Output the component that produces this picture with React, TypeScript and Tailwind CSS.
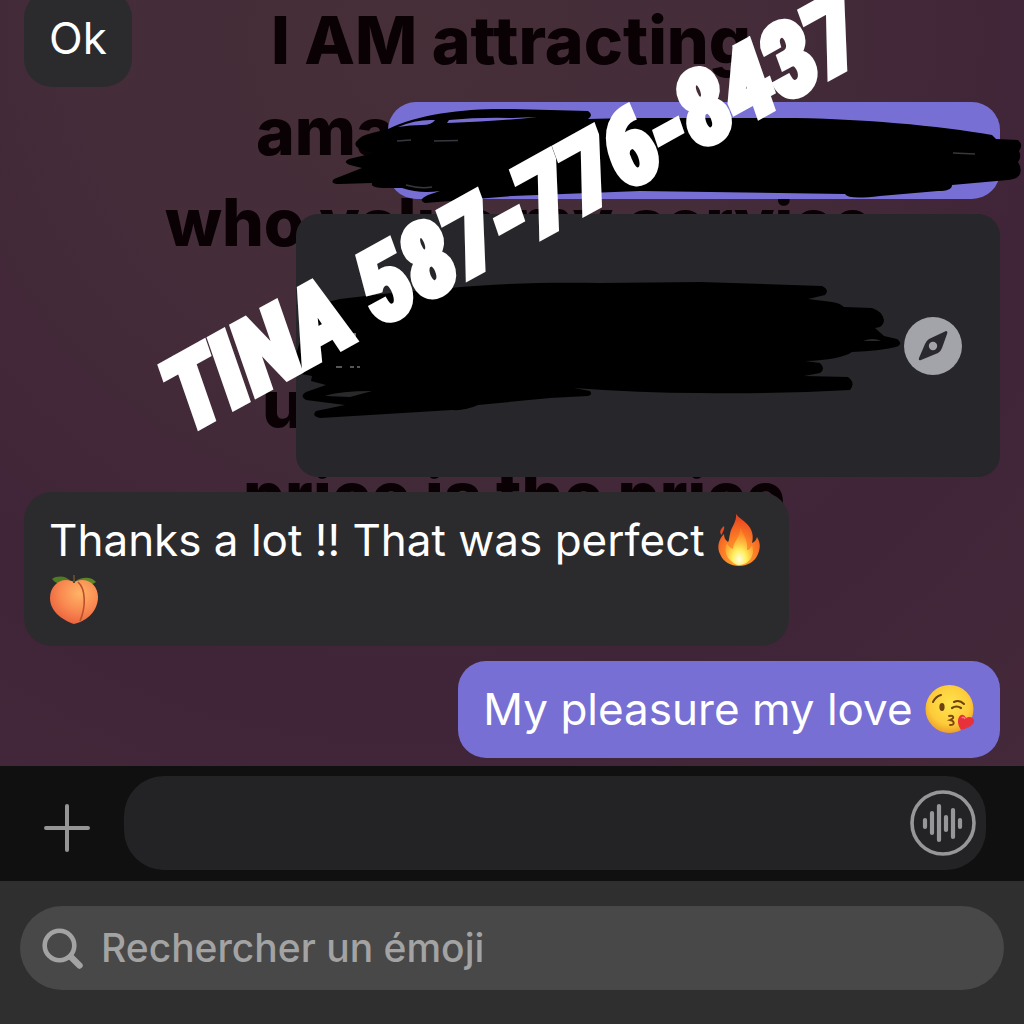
import type { ReactNode } from "react";

interface WallpaperLine {
  text: string;
  indent: string;
}

const wallpaperLines: WallpaperLine[] = [
  { text: "I AM attracting", indent: "pl-[271px]" },
  { text: "ama", indent: "pl-[256px]" },
  { text: "who value my service", indent: "pl-[165px]" },
  { text: "", indent: "pl-0" },
  { text: "u", indent: "pl-[262px]" },
  { text: "price is the price", indent: "pl-[243px]" },
];

function Bubble({ mine, children }: { mine?: boolean; children: ReactNode }) {
  return (
    <div
      className={`max-w-[765px] px-[25px] py-[20px] rounded-[28px] text-[44px] leading-[57px] text-white ${
        mine ? "self-end bg-[#776fd3]" : "self-start bg-[#2b2b2d]"
      }`}
    >
      {children}
    </div>
  );
}

function FireEmoji() {
  return (
    <svg viewBox="3 0 44 54" className="inline-block w-[44px] h-[54px] align-[-11px]" role="img" aria-label="fire">
      <defs>
        <radialGradient id="fireOuter" cx="0.5" cy="0.85" r="0.85">
          <stop offset="0" stopColor="#ffb52e" />
          <stop offset="0.5" stopColor="#fb7a26" />
          <stop offset="1" stopColor="#e83d1e" />
        </radialGradient>
        <radialGradient id="fireInner" cx="0.5" cy="0.85" r="0.75">
          <stop offset="0" stopColor="#fffde0" />
          <stop offset="0.35" stopColor="#ffee5c" />
          <stop offset="1" stopColor="#ff9a2a" stopOpacity="0.4" />
        </radialGradient>
      </defs>
      <path
        d="M22 1c1 8-5 13-6 20-1 4-1 7-2 8-3-2-4-5-4-8-6 6-7 14-4 20 3 8 11 12 19 12s16-4 19-12c3-7 2-12-1-17-1 3-2 5-5 6 2-7 0-14-5-19-4-4-8-6-11-10z"
        fill="url(#fireOuter)"
      />
      <path d="M10 13c-4 3-5 7-2 9 0-3 3-5 2-9z" fill="#e84a20" />
      <path
        d="M26 15c1 8-7 14-7 21-3-1-5-3-6-6-3 7-1 13 3 17 3 3 6 5 9 5 5 0 10-3 12-7 3-5 2-9 1-13-1 3-3 5-5 5 1-9-3-15-7-22z"
        fill="url(#fireInner)"
      />
    </svg>
  );
}

function PeachEmoji() {
  return (
    <svg viewBox="0 0 50 50" className="inline-block w-[50px] h-[50px] align-[-12px]" role="img" aria-label="peach">
      <defs>
        <radialGradient id="peachSkin" cx="0.62" cy="0.3" r="0.75">
          <stop offset="0" stopColor="#ffb467" />
          <stop offset="0.55" stopColor="#f98850" />
          <stop offset="1" stopColor="#e95f3c" />
        </radialGradient>
      </defs>
      <path d="M3 4c6-4 15-3 19 3-5 4-14 4-19-3z" fill="#4f7b22" />
      <path d="M47 7c-4-5-13-6-20-1 4 4 14 6 20 1z" fill="#5b8728" />
      <path
        d="M25 49C13 45 1 36 1 23 1 12 9 5 17 5c4 0 6 1 8 2 2-1 5-2 8-2 9 0 16 7 16 17 0 13-10 24-24 27z"
        fill="url(#peachSkin)"
      />
      <path d="M29 7c8 7 8 25 2 39" fill="none" stroke="#b9502f" strokeWidth="1.6" />
      <path d="M25 0v8" stroke="#5d4a28" strokeWidth="2" />
    </svg>
  );
}

function KissEmoji() {
  return (
    <svg viewBox="0 0 50 50" className="inline-block w-[50px] h-[50px] align-[-9px]" role="img" aria-label="blowing a kiss">
      <defs>
        <radialGradient id="kissFace" cx="0.5" cy="0.4" r="0.6">
          <stop offset="0" stopColor="#ffe44d" />
          <stop offset="0.7" stopColor="#fdcb3a" />
          <stop offset="1" stopColor="#eda02a" />
        </radialGradient>
      </defs>
      <circle cx="24.5" cy="25" r="24" fill="url(#kissFace)" />
      <ellipse cx="17" cy="23" rx="2.6" ry="4" fill="#6b4210" />
      <path d="M8 18c2-4 4-6 8-7M29 18c4-2 7-1 10 2" fill="none" stroke="#6b4210" strokeWidth="2" strokeLinecap="round" />
      <path d="M27 24c3-2 6-2 9 0" fill="none" stroke="#6b4210" strokeWidth="2.2" strokeLinecap="round" />
      <path d="M24 32c5-1 6 2 1 4 5 1 5 5 0 5" fill="none" stroke="#7a4513" strokeWidth="1.8" strokeLinecap="round" />
      <path d="M36 46c-3-5-4-9-2-13 2-3 5-3 7 1 3-2 7-1 8 2 1 5-6 8-13 10z" fill="#e7323b" />
      <path d="M37 34c1-1 2-1 3 1" fill="none" stroke="#ff8285" strokeWidth="1.5" />
    </svg>
  );
}

// Marker strokes over the sent message
function MessageScribble() {
  return (
    <svg viewBox="388 101 612 97" className="absolute left-0 top-0 w-[612px] h-[97px] overflow-visible" aria-hidden="true">
      <path
        d="M388 128C420 112 470 107 512 108L588 110Q594 114 588 118L630 117L780 117C860 117 940 125 992 134L996 138L1018 139Q1024 144 1019 150Q1022 156 1018 161Q1022 167 1020 173Q1018 178 1008 179L952 184Q952 190 938 190L880 195Q848 199 845 193L640 190L512 195L425 202Q417 199 428 194L440 190Q420 193 402 187L386 187Q370 187 372 182L340 183Q329 183 334 178L362 167L350 164Q342 161 349 158L374 152Q352 148 356 141Q360 135 372 132Z"
        fill="#000"
      />
      <path
        d="M398 126Q416 118 435 119Q432 124 422 124Q410 124 398 126ZM447 122L449 119Q480 116 512 117L537 116Q500 120 447 122Z"
        fill="#776fd3"
      />
      <path d="M397 140L411 139M434 140L458 139.5M953 152L975 153M406 184Q420 188 432 186" fill="none" stroke="#38363f" strokeWidth="1.5" />
    </svg>
  );
}

// Marker strokes over the link preview
function PreviewScribble() {
  return (
    <svg viewBox="296 214 704 263" className="absolute left-0 top-0 w-[704px] h-[263px] overflow-visible" aria-hidden="true">
      <path
        d="M312 306L340 299L400 292L450 288C490 284 540 282 600 283L700 282L822 286Q830 290 825 295L808 299L832 302Q840 303 844 307L872 308Q882 311 884 320Q884 327 875 328L884 336L897 339Q904 344 896 347Q880 351 852 352Q840 360 805 361L820 363Q826 369 820 373L804 376L848 377Q856 383 850 390Q780 394 700 393Q640 393 574 388L590 391Q593 395 588 396L550 398L478 405Q465 411 452 410L370 415L320 418Q311 416 316 411L345 405L306 400Q299 396 306 392L326 385L311 381L312 376L290 372Z"
        fill="#000"
      />
      <path d="M325 396Q340 391 372 391L350 397Z" fill="#29282b" />
      <path d="M863 341Q873 337 881 341Z" fill="#2a292d" />
      <path d="M336 335h24" fill="none" stroke="#737376" strokeWidth="4" strokeDasharray="7 8 5 8" />
      <path d="M336 367h24" fill="none" stroke="#737376" strokeWidth="1.5" strokeDasharray="6 8 4 3" />
    </svg>
  );
}

export default function App() {
  return (
    <div className="min-h-screen flex flex-col font-['Inter','Liberation_Sans',sans-serif]">
      <main className="relative flex-1 flex flex-col overflow-hidden bg-[radial-gradient(circle_at_40%_5%,#462f37_0%,#442c39_35%,#402438_70%,#44293a_100%)]">
        {/* Wallpaper quote */}
        <div className="absolute inset-x-0 -top-[5px] text-[66px] leading-[91px] font-extrabold text-[#090104] whitespace-nowrap">
          {wallpaperLines.map((line, i) => (
            <p key={i} className={`h-[91px] ${line.indent}`}>
              {line.text}
            </p>
          ))}
        </div>

        {/* Conversation */}
        <div className="relative flex-1 flex flex-col justify-end gap-[15px] px-6 pb-2 -mt-3">
          <Bubble>Ok</Bubble>

          <div className="relative self-end w-[612px] h-[97px] rounded-[28px] bg-[#776fd3]">
            <MessageScribble />
          </div>

          <div className="relative self-end w-[704px] h-[263px] pr-[38px] rounded-[22px] bg-[#27262a] flex items-center justify-end">
            <PreviewScribble />
            <button type="button" aria-label="Open in browser" className="relative">
              <svg viewBox="0 0 58 58" className="w-[58px] h-[58px]">
                <circle cx="29" cy="29" r="29" fill="#a3a3aa" />
                <path
                  d="M42 14Q44 14 43 17L38 31Q37 34 34 36L17 43Q14 44 15 41L21 27Q22 24 25 22Z"
                  fill="#29292f"
                />
                <circle cx="29" cy="29" r="4.2" fill="#a3a3aa" />
              </svg>
            </button>
          </div>

          <Bubble>
            Thanks a lot !! That was perfect <FireEmoji /> <PeachEmoji />
          </Bubble>
          <Bubble mine>
            My pleasure my love <KissEmoji />
          </Bubble>
        </div>

        {/* Contact sticker */}
        <div className="absolute inset-x-0 top-[159px] flex justify-center pointer-events-none">
          <p className="-rotate-[29deg] whitespace-nowrap font-['Liberation_Sans_Narrow','Roboto_Condensed',sans-serif] font-bold italic text-[100px] leading-[110px] text-white [-webkit-text-stroke:7px_white]">
            TINA 587-776-8437
          </p>
        </div>
      </main>

      {/* Composer */}
      <div className="flex items-center gap-[34px] h-[115px] pl-11 pr-[38px] bg-[#101010]">
        <button type="button" aria-label="Add attachment" className="pt-2">
          <svg viewBox="0 0 46 48" className="w-[46px] h-[48px]" fill="none" stroke="#959595" strokeWidth="4" strokeLinecap="round">
            <path d="M23 2v44M2 24h42" />
          </svg>
        </button>
        <div className="flex-1 flex items-center h-[94px] pr-[10px] mb-[2px] rounded-[40px] bg-[#232325]">
          <input type="text" aria-label="Message" className="flex-1 min-w-0 px-6 text-[40px] text-white bg-transparent outline-none" />
          <button type="button" aria-label="Record voice message">
            <svg viewBox="0 0 66 66" className="w-[66px] h-[66px]" fill="none" stroke="#97979a" strokeLinecap="round">
              <circle cx="33" cy="33" r="31" strokeWidth="3.6" />
              <path d="M15 30v7M22 23v20M29 16v34M36 27v13M43 20v27M50 30v7" strokeWidth="4.2" />
            </svg>
          </button>
        </div>
      </div>

      {/* Emoji search */}
      <div className="h-[143px] pt-[25px] px-5 bg-[#2f2f2f]">
        <label className="flex items-center gap-[18px] h-[84px] px-[22px] rounded-full bg-[#484848]">
          <svg viewBox="0 0 41 41" className="w-[41px] h-[41px]" fill="none" stroke="#a3a3a3" strokeLinecap="round">
            <circle cx="17.5" cy="17.5" r="14.8" strokeWidth="4.6" />
            <path d="M29 29l8.5 8.5" strokeWidth="6.4" />
          </svg>
          <input
            type="search"
            aria-label="Rechercher un émoji"
            placeholder="Rechercher un émoji"
            className="flex-1 min-w-0 text-[39px] font-medium bg-transparent outline-none placeholder:text-[#a3a3a3]"
          />
        </label>
      </div>
    </div>
  );
}
